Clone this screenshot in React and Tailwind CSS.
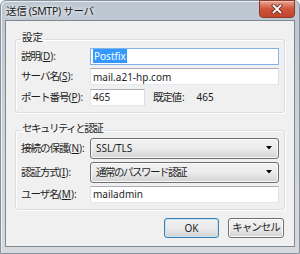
const font = { fontFamily: '"Noto Sans", "Noto Sans CJK JP", sans-serif' };

function Key({ k }) {
  return <span className="underline underline-offset-1">{k}</span>;
}

function Label({ text, k }) {
  return (
    <div className="w-[69px] shrink-0 whitespace-nowrap text-[10.5px] leading-none text-[#1e1e1e] tracking-[-1px]">
      {text}
      <span className="tracking-normal text-[10px]">
        (<Key k={k} />):
      </span>
    </div>
  );
}

function TextBox({ children, className = "", focused = false }) {
  return (
    <div
      className={
        "h-[17px] flex items-center bg-white border px-[2px] text-[10px] leading-none text-[#1e1e1e] whitespace-nowrap " +
        (focused ? "border-[#7eb4ea] " : "border-[#abadb3] border-l-[#e2e3ea] border-r-[#dbdfe6] border-b-[#e3e9ef] ") +
        className
      }
    >
      {children}
    </div>
  );
}

function Combo({ children, tight = false }) {
  return (
    <div className="flex-1 h-[21px] flex items-center justify-between pl-[5px] pr-[6px] rounded-[3px] border border-[#707070] bg-gradient-to-b from-[#f2f2f2] via-[#ebebeb] to-[#d3d3d3] shadow-[inset_0_0_0_1px_#f8f8f8] text-[10.5px] leading-none text-[#1e1e1e] whitespace-nowrap">
      <span className={tight ? "tracking-[-1.5px]" : "text-[10px]"}>{children}</span>
      <svg width="6" height="4" viewBox="0 0 6 4">
        <path d="M0 0H6L3 3.5Z" fill="#000" />
      </svg>
    </div>
  );
}

function Row({ children }) {
  return <div className="flex items-center">{children}</div>;
}

function Group({ title, children, className = "", legendClass = "" }) {
  return (
    <fieldset
      className={
        "mx-[9px] border border-[#d5dfe5] rounded-[3px] shadow-[inset_1px_1px_0_#fff,1px_1px_0_#fff] pl-[5px] pr-[5px] pb-[6px] " + className
      }
    >
      <legend className={"px-[1px] pb-[5px] text-[10.5px] leading-[12px] text-[#1e1e1e] whitespace-nowrap " + legendClass}>
        {title}
      </legend>
      {children}
    </fieldset>
  );
}

export default function App() {
  return (
    <div className="w-[300px] h-[254px] overflow-hidden bg-white" style={font}>
      <div className="w-[300px] h-[254px] flex flex-col rounded-t-[6px] border border-[#8a929c] bg-gradient-to-b from-[#bcc6d1] via-[#cdd4dc] to-[#d6dadf] shadow-[inset_1px_1px_0_#e9eef3]">
        {/* title bar */}
        <div className="h-[19px] flex items-start justify-between shrink-0">
          <div className="pl-[5px] pt-[4px] text-[10.5px] leading-[12px] text-[#1a1a1a] tracking-[-0.3px] whitespace-nowrap [text-shadow:0_0_6px_#fff,0_0_3px_#fff]">
            送信 (SMTP) サーバ
          </div>
          <div className="mr-[4px] -mt-px w-[36px] h-[18px] flex items-center justify-center rounded-b-[4px] border border-[#8a3a2c] bg-gradient-to-b from-[#e8a493] via-[#d0523a] to-[#c4452d] shadow-[inset_0_1px_0_#f1c3b6]">
            <svg width="12" height="10" viewBox="0 0 12 10">
              <path d="M2.5 1.5L9.5 8.5M9.5 1.5L2.5 8.5" stroke="#5a2e26" strokeWidth="3.4" strokeLinecap="square" />
              <path d="M2.5 1.5L9.5 8.5M9.5 1.5L2.5 8.5" stroke="#fff" strokeWidth="1.8" strokeLinecap="square" />
            </svg>
          </div>
        </div>
        {/* client */}
        <div className="mx-[4px] mb-[6px] flex-1 border border-[#7f8790] bg-[#f0f0f0] flex flex-col pt-[9.5px]">
          <Group title="設定">
            <div className="flex flex-col gap-[3.5px]">
              <Row>
                <Label text="説明" k="D" />
                <TextBox focused className="flex-1">
                  <span className="bg-[#3399ff] text-white px-[1px] py-[2px]">Postfix</span>
                </TextBox>
              </Row>
              <Row>
                <Label text="サーバ名" k="S" />
                <TextBox className="flex-1">mail.a21-hp.com</TextBox>
              </Row>
              <Row>
                <Label text="ポート番号" k="P" />
                <TextBox className="w-[55px]">465</TextBox>
                <span className="ml-[8px] text-[10.5px] leading-none text-[#1e1e1e] tracking-[-1.2px] whitespace-nowrap">
                  既定値<span className="tracking-normal text-[10px] ml-[1px]">:</span>
                </span>
                <span className="ml-[12px] text-[10px] leading-none text-[#1e1e1e]">465</span>
              </Row>
            </div>
          </Group>
          <Group title="セキュリティと認証" className="mt-[9.5px]" legendClass="tracking-[-1.5px]">
            <div className="flex flex-col gap-[3px] -mt-[1.5px]">
              <Row>
                <Label text="接続の保護" k="N" />
                <Combo>SSL/TLS</Combo>
              </Row>
              <Row>
                <Label text="認証方式" k="I" />
                <Combo tight>通常のパスワード認証</Combo>
              </Row>
              <Row>
                <Label text="ユーザ名" k="M" />
                <TextBox className="flex-1">mailadmin</TextBox>
              </Row>
            </div>
          </Group>
          <div className="flex justify-end gap-[9px] mt-[8px] mr-[10px]">
            <button className="w-[55px] h-[20px] rounded-[3px] border border-[#3c7fb1] bg-gradient-to-b from-[#f2f2f2] via-[#ebebeb] to-[#d3d3d3] shadow-[inset_0_0_0_1px_#c4e5f6] text-[10px] leading-none text-[#1e1e1e]">
              OK
            </button>
            <button className="w-[56px] h-[20px] rounded-[3px] border border-[#707070] bg-gradient-to-b from-[#f2f2f2] via-[#ebebeb] to-[#d3d3d3] shadow-[inset_0_0_0_1px_#fcfcfc] text-[10.5px] leading-none text-[#1e1e1e] tracking-[-1px] whitespace-nowrap">
              キャンセル
            </button>
          </div>
        </div>
      </div>
    </div>
  );
}
